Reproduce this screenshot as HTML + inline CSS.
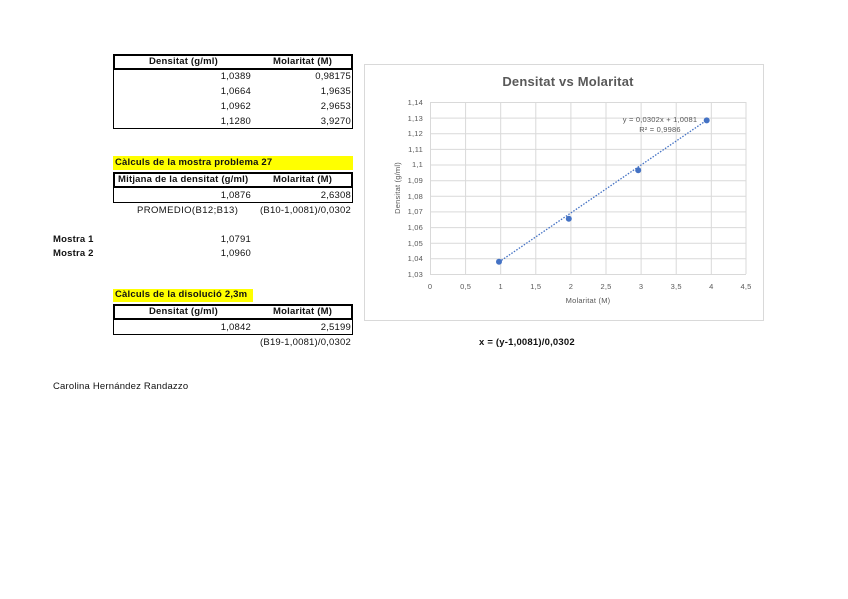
<!DOCTYPE html>
<html><head><meta charset="utf-8"><style>
body{margin:0;width:848px;height:599px;background:#fff;position:relative;font-family:"Liberation Sans",sans-serif;font-size:9.5px;color:#111;overflow:hidden;letter-spacing:0.2px}
.a{position:absolute;white-space:nowrap}
.b{font-weight:bold}
.box{position:absolute;box-sizing:border-box}
.r{text-align:right}
</style></head><body>
<div class="box" style="left:113px;top:54px;width:240px;height:75px;border:1px solid #000"></div>
<div class="box" style="left:113px;top:54px;width:240px;height:16px;border:2px solid #000"></div>
<div class="a b" style="left:149px;top:56px">Densitat (g/ml)</div>
<div class="a b" style="left:273px;top:56px">Molaritat (M)</div>
<div class="a r" style="left:160px;width:91px;top:71px">1,0389</div><div class="a r" style="left:260px;width:91px;top:71px">0,98175</div>
<div class="a r" style="left:160px;width:91px;top:86px">1,0664</div><div class="a r" style="left:260px;width:91px;top:86px">1,9635</div>
<div class="a r" style="left:160px;width:91px;top:101px">1,0962</div><div class="a r" style="left:260px;width:91px;top:101px">2,9653</div>
<div class="a r" style="left:160px;width:91px;top:116px">1,1280</div><div class="a r" style="left:260px;width:91px;top:116px">3,9270</div>
<div class="box" style="left:113px;top:156px;width:240px;height:14px;background:#ffff00"></div>
<div class="a b" style="left:115px;top:157px">Càlculs de la mostra problema 27</div>
<div class="box" style="left:113px;top:172px;width:240px;height:31px;border:1px solid #000"></div>
<div class="box" style="left:113px;top:172px;width:240px;height:16px;border:2px solid #000"></div>
<div class="a b" style="left:118px;top:174px">Mitjana de la densitat (g/ml)</div>
<div class="a b" style="left:273px;top:174px">Molaritat (M)</div>
<div class="a r" style="left:160px;width:91px;top:190px">1,0876</div><div class="a r" style="left:260px;width:91px;top:190px">2,6308</div>
<div class="a" style="left:137px;top:205px;letter-spacing:0.4px">PROMEDIO(B12;B13)</div>
<div class="a r" style="left:240px;width:111px;top:205px">(B10-1,0081)/0,0302</div>
<div class="a b" style="left:53px;top:234px">Mostra 1</div><div class="a r" style="left:160px;width:91px;top:234px">1,0791</div>
<div class="a b" style="left:53px;top:248px">Mostra 2</div><div class="a r" style="left:160px;width:91px;top:248px">1,0960</div>
<div class="box" style="left:113px;top:289px;width:140px;height:13px;background:#ffff00"></div>
<div class="a b" style="left:115px;top:289px">Càlculs de la disolució 2,3m</div>
<div class="box" style="left:113px;top:304px;width:240px;height:31px;border:1px solid #000"></div>
<div class="box" style="left:113px;top:304px;width:240px;height:16px;border:2px solid #000"></div>
<div class="a b" style="left:149px;top:306px">Densitat (g/ml)</div>
<div class="a b" style="left:273px;top:306px">Molaritat (M)</div>
<div class="a r" style="left:160px;width:91px;top:322px">1,0842</div><div class="a r" style="left:260px;width:91px;top:322px">2,5199</div>
<div class="a r" style="left:240px;width:111px;top:337px">(B19-1,0081)/0,0302</div>
<div class="a b" style="left:479px;top:337px">x = (y-1,0081)/0,0302</div>
<div class="a" style="left:53px;top:381px">Carolina Hernández Randazzo</div>
<svg class="a" style="left:0;top:0" width="848" height="599" font-family="Liberation Sans,sans-serif">
<rect x="364.5" y="64.5" width="399" height="256" fill="#fff" stroke="#d9d9d9"/>
<text x="568" y="86" text-anchor="middle" font-size="13" font-weight="bold" fill="#595959">Densitat vs Molaritat</text>
<g stroke="#d9d9d9" stroke-width="1">
<line x1="430" y1="102.5" x2="746" y2="102.5"/><line x1="430" y1="118.1" x2="746" y2="118.1"/><line x1="430" y1="133.8" x2="746" y2="133.8"/><line x1="430" y1="149.4" x2="746" y2="149.4"/><line x1="430" y1="165" x2="746" y2="165"/><line x1="430" y1="180.7" x2="746" y2="180.7"/><line x1="430" y1="196.3" x2="746" y2="196.3"/><line x1="430" y1="211.9" x2="746" y2="211.9"/><line x1="430" y1="227.6" x2="746" y2="227.6"/><line x1="430" y1="243.2" x2="746" y2="243.2"/><line x1="430" y1="258.8" x2="746" y2="258.8"/><line x1="430" y1="274.5" x2="746" y2="274.5"/>
<line x1="430.5" y1="102" x2="430.5" y2="274"/><line x1="465.6" y1="102" x2="465.6" y2="274"/><line x1="500.7" y1="102" x2="500.7" y2="274"/><line x1="535.8" y1="102" x2="535.8" y2="274"/><line x1="570.9" y1="102" x2="570.9" y2="274"/><line x1="606" y1="102" x2="606" y2="274"/><line x1="641.1" y1="102" x2="641.1" y2="274"/><line x1="676.2" y1="102" x2="676.2" y2="274"/><line x1="711.3" y1="102" x2="711.3" y2="274"/><line x1="746" y1="102" x2="746" y2="274"/>
</g>
<g font-size="7.5" fill="#595959" text-anchor="end">
<text x="423" y="105">1,14</text><text x="423" y="121">1,13</text><text x="423" y="136">1,12</text><text x="423" y="152">1,11</text><text x="423" y="167">1,1</text><text x="423" y="183">1,09</text><text x="423" y="199">1,08</text><text x="423" y="214">1,07</text><text x="423" y="230">1,06</text><text x="423" y="246">1,05</text><text x="423" y="261">1,04</text><text x="423" y="277">1,03</text>
</g>
<g font-size="7.5" fill="#595959" text-anchor="middle">
<text x="430" y="289">0</text><text x="465.6" y="289">0,5</text><text x="500.7" y="289">1</text><text x="535.8" y="289">1,5</text><text x="570.9" y="289">2</text><text x="606" y="289">2,5</text><text x="641.1" y="289">3</text><text x="676.2" y="289">3,5</text><text x="711.3" y="289">4</text><text x="746" y="289">4,5</text>
<text x="588" y="303">Molaritat (M)</text>
<text transform="translate(400,188) rotate(-90)">Densitat (g/ml)</text>
</g>
<line x1="499" y1="262" x2="707" y2="120" stroke="#4472c4" stroke-width="1.3" stroke-dasharray="1.5,1.5"/>
<g fill="#4472c4"><circle cx="499" cy="261.8" r="3"/><circle cx="568.8" cy="218.8" r="3"/><circle cx="638.2" cy="170.3" r="3"/><circle cx="706.7" cy="120.4" r="3"/></g>
<g font-size="7.5" fill="#595959" text-anchor="middle"><text x="660" y="122">y = 0,0302x + 1,0081</text><text x="660" y="132">R² = 0,9986</text></g>
</svg>
</body></html>
